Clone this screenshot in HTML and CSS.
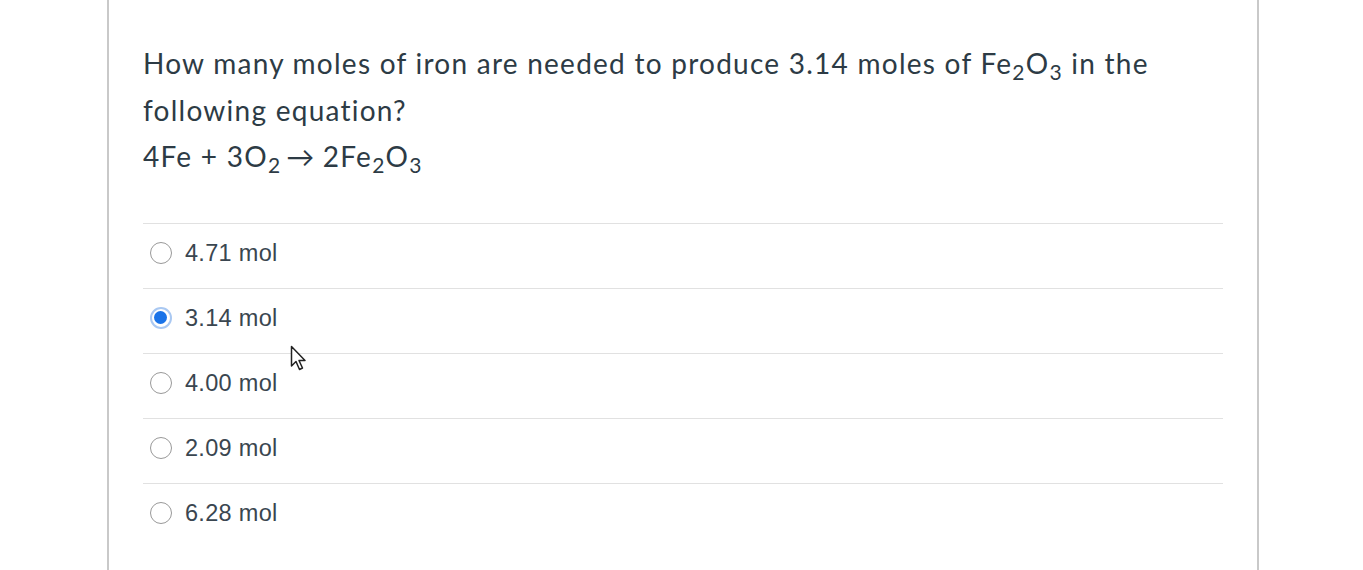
FILE: index.html
```html
<!DOCTYPE html>
<html>
<head>
<meta charset="utf-8">
<link rel="stylesheet" href="styles.css">
</head>
<body>
<div class="page">
  <div class="card">
    <div class="question">
      <div>How many moles of iron are needed to produce 3.14 moles of Fe<sub>2</sub>O<sub>3</sub> in the following equation?</div>
      <div>4Fe + 3O<sub>2</sub><span class="arrow">→</span> 2Fe<sub>2</sub>O<sub>3</sub></div>
    </div>
    <ul class="answers">
      <li class="answer"><span class="radio"></span><span class="label">4.71 mol</span></li>
      <li class="answer"><span class="radio checked"></span><span class="label">3.14 mol</span></li>
      <li class="answer"><span class="radio"></span><span class="label">4.00 mol</span></li>
      <li class="answer"><span class="radio"></span><span class="label">2.09 mol</span></li>
      <li class="answer"><span class="radio"></span><span class="label">6.28 mol</span></li>
    </ul>
    <svg class="cursor" width="20" height="28" viewBox="0 0 20 28"><path d="M1.5 1.5 L1.5 21 L6 16.5 L9.5 24.5 L12.5 23 L9 15.5 L15 15.5 Z" fill="#fff" stroke="#222" stroke-width="1.5" stroke-linejoin="round"/></svg>
  </div>
</div>
</body>
</html>
```
FILE: styles.css
```css
html, body {
  margin: 0;
  padding: 0;
  background: #ffffff;
}
.page {
  height: 570px;
  overflow: hidden;
}
.card {
  position: relative;
  margin-left: 107px;
  width: 1152px;
  height: 570px;
  border-left: 2px solid #c9c9c9;
  border-right: 2px solid #c9c9c9;
  padding: 40px 34px 0 34px;
  box-sizing: border-box;
  color: #2d3b45;
}
.question {
  font-family: Lato, "Open Sans", sans-serif;
  font-size: 28px;
  line-height: 46.5px;
  width: 1070px;
  letter-spacing: 1.25px;
}
.question sub {
  font-size: 21px;
  vertical-align: -6px;
  line-height: 0;
}
.arrow {
  margin-left: 5px;
  letter-spacing: 0;
}
.answers {
  list-style: none;
  margin: 43px 0 0 0;
  padding: 0;
  width: 1080px;
}
.answer {
  display: flex;
  align-items: center;
  border-top: 1.5px solid #e1e1e1;
  padding-left: 7px;
  padding-bottom: 5px;
  box-sizing: border-box;
  height: 65px;
}
.radio {
  width: 22px;
  height: 22px;
  border: 1.5px solid #999999;
  border-radius: 50%;
  box-sizing: border-box;
  background: #fff;
  margin-right: 13px;
  flex: none;
  position: relative;
}
.radio.checked {
  border: 2.5px solid #a9c8f2;
}
.radio.checked::after {
  content: "";
  position: absolute;
  left: 2px;
  top: 2px;
  width: 13px;
  height: 13px;
  border-radius: 50%;
  background: #1a73e8;
}
.label {
  font-family: "Liberation Sans", Arial, sans-serif;
  font-size: 23.5px;
  color: #3a4650;
  letter-spacing: 0.3px;
}
.cursor {
  position: absolute;
  left: 181px;
  top: 345px;
}
```
